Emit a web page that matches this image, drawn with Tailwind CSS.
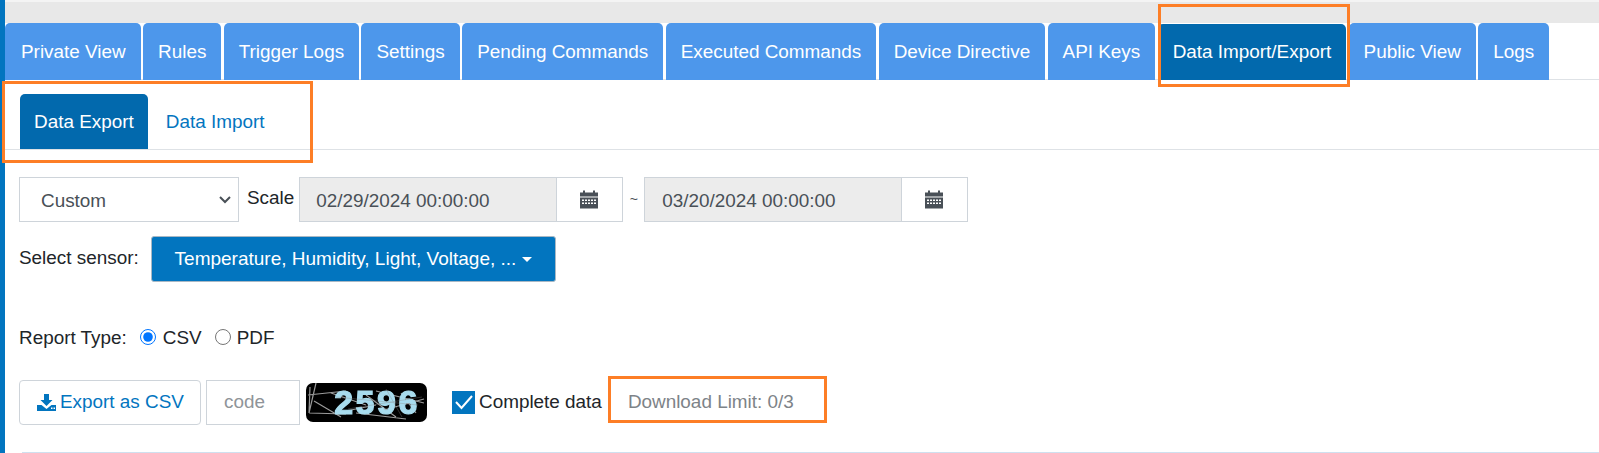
<!DOCTYPE html>
<html lang="en">
<head>
  <meta charset="UTF-8">
  <title>Data Export</title>
  <script src="https://cdn.jsdelivr.net/npm/@tailwindcss/browser@4"></script>
</head>
<body class="bg-white font-['Liberation_Sans',Arial,sans-serif] text-[18.9px] text-[#212529] overflow-hidden">
  <div class="relative flex h-[453px] w-[1599px] overflow-hidden">
    <!-- Sidebar edge -->
    <div class="w-[5px] shrink-0 bg-[#0275bf]"></div>

    <div class="flex-1 min-w-0">
      <!-- Top strip -->
      <div class="h-[23px] bg-[#e8e8e8] border-t-2 border-[#f4f4f4]"></div>

      <!-- Main tabs -->
      <div class="flex h-[57px] gap-[2.4px] border-b border-[#dee2e6] text-white">
        <a class="flex items-center h-[57px] pt-[2px] pl-[16px] pr-[15px] rounded-t-[5px] bg-[#4d97eb]">Private View</a>
        <a class="flex items-center h-[57px] pt-[2px] px-[15px] rounded-t-[5px] bg-[#4d97eb]">Rules</a>
        <a class="flex items-center h-[57px] pt-[2px] px-[15px] rounded-t-[5px] bg-[#4d97eb]">Trigger Logs</a>
        <a class="flex items-center h-[57px] pt-[2px] px-[15px] rounded-t-[5px] bg-[#4d97eb]">Settings</a>
        <a class="flex items-center h-[57px] pt-[2px] px-[15px] rounded-t-[5px] bg-[#4d97eb]">Pending Commands</a>
        <a class="flex items-center h-[57px] pt-[2px] px-[15px] rounded-t-[5px] bg-[#4d97eb]">Executed Commands</a>
        <a class="flex items-center h-[57px] pt-[2px] px-[15px] rounded-t-[5px] bg-[#4d97eb]">Device Directive</a>
        <a class="flex items-center h-[57px] pt-[2px] px-[15px] rounded-t-[5px] bg-[#4d97eb]">API Keys</a>
        <a class="flex items-center h-[56px] mt-px pt-px px-[15px] rounded-t-[5px] bg-[#0269ad]">Data Import/Export</a>
        <a class="flex items-center h-[57px] pt-[2px] px-[15px] rounded-t-[5px] bg-[#4d97eb]">Public View</a>
        <a class="flex items-center h-[57px] pt-[2px] px-[15px] rounded-t-[5px] bg-[#4d97eb]">Logs</a>
      </div>

      <!-- Sub tabs -->
      <div class="flex h-[70px] items-end pl-[15px] border-b border-[#dee2e6]">
        <a class="flex items-center h-[55px] pt-[2px] px-[14px] rounded-t-[5px] bg-[#0269ad] text-white">Data Export</a>
        <a class="flex items-center h-[55px] pt-[2px] px-[18px] text-[#0275bf]">Data Import</a>
      </div>

      <div class="pl-[14px] pt-[27px]">
        <!-- Date range -->
        <div class="flex items-center h-[45px]">
          <div class="relative">
            <select class="block appearance-none w-[220px] h-[45px] pt-[3px] pl-[21px] border border-[#ced4da] text-[#495057]">
              <option>Custom</option>
            </select>
            <svg class="absolute right-[8px] top-[19px] w-[12px] h-[8px]" viewBox="0 0 12 8" fill="none" stroke="#495057" stroke-width="2"><path d="M1 1l5 5 5-5"/></svg>
          </div>
          <span class="ml-[8px] mr-[5px] -mt-[2px]">Scale</span>
          <div class="flex h-[45px] w-[324px] border border-[#ced4da] text-[#495057]">
            <div class="flex items-center flex-1 pt-[3px] pl-[16px] bg-[#ececec] border-r border-[#ced4da]">02/29/2024 00:00:00</div>
            <div class="flex items-center justify-center w-[65px] pr-[2px]">
              <svg class="w-[18px] h-[19px]" viewBox="0 0 18 18" fill="#495057"><path d="M3 0h2v2h8V0h2v2h3v4H0V2h3z"/><path fill-rule="evenodd" d="M0 7h18v11H0zM2 9v1.500h2V9zm3 0v1.500h2V9zm3 0v1.500h2V9zm3 0v1.500h2V9zm3 0v1.500h2V9zM2 12v1.500h2V12zm3 0v1.500h2V12zm3 0v1.500h2V12zm3 0v1.500h2V12zm3 0v1.500h2V12z"/></svg>
            </div>
          </div>
          <span class="w-[21px] text-center text-[14px] text-[#495057]">~</span>
          <div class="flex h-[45px] w-[324px] border border-[#ced4da] text-[#495057]">
            <div class="flex items-center flex-1 pt-[3px] pl-[17px] bg-[#ececec] border-r border-[#ced4da]">03/20/2024 00:00:00</div>
            <div class="flex items-center justify-center w-[65px] pr-[2px]">
              <svg class="w-[18px] h-[19px]" viewBox="0 0 18 18" fill="#495057"><path d="M3 0h2v2h8V0h2v2h3v4H0V2h3z"/><path fill-rule="evenodd" d="M0 7h18v11H0zM2 9v1.500h2V9zm3 0v1.500h2V9zm3 0v1.500h2V9zm3 0v1.500h2V9zm3 0v1.500h2V9zM2 12v1.500h2V12zm3 0v1.500h2V12zm3 0v1.500h2V12zm3 0v1.500h2V12zm3 0v1.500h2V12z"/></svg>
            </div>
          </div>
        </div>

        <!-- Sensor select -->
        <div class="flex items-center h-[46px] mt-[14px]">
          <span class="w-[132px] -mt-[2px]">Select sensor:</span>
          <button class="flex items-center justify-center w-[405px] h-[46px] rounded-[3px] bg-[#0275bf] border border-[#a9b8c4] text-white text-[19px]">
            Temperature, Humidity, Light, Voltage, ...
            <span class="ml-[6px] mt-[1px] border-x-[5px] border-t-[5px] border-x-transparent border-t-white"></span>
          </button>
        </div>

        <!-- Report type -->
        <div class="flex items-center h-[24px] mt-[44px]">
          <span>Report Type:</span>
          <input type="radio" name="report" checked class="w-[16px] h-[16px] -mt-[3px] ml-[13px] mr-[7px] accent-[#0075ff]">
          <span>CSV</span>
          <input type="radio" name="report" class="w-[16px] h-[16px] -mt-[3px] ml-[13px] mr-[6px]">
          <span>PDF</span>
        </div>

        <!-- Export row -->
        <div class="flex items-center h-[46px] mt-[29px]">
          <button class="flex items-center w-[182px] h-[45px] pl-[17px] rounded-[4px] border border-[#ced4da] text-[#0275bf]">
            <svg class="w-[19px] h-[17px] mr-[4px]" viewBox="0 0 19 17" fill="#0275bf"><path d="M7 0h5v6h3.500L9.500 12 3.500 6H7z"/><path fill-rule="evenodd" d="M0 11h4.500l5 4 5-4H19v6H0zM14 13.500v1.500h1.500v-1.500zM16.500 13.500v1.500H18v-1.500z"/></svg>
            Export as CSV
          </button>
          <input placeholder="code" class="w-[94px] h-[45px] ml-[5px] pl-[17px] border border-[#ced4da] placeholder:text-[#8f9499]">
          <!-- Captcha -->
          <svg class="w-[121px] h-[39px] ml-[6px]" viewBox="0 0 121 39">
            <rect width="121" height="39" rx="7" fill="#000"/>
            <g stroke="#9a9a9a" stroke-width="1.200">
              <path d="M2 12L40 8M10 0L3 30M3 30L40 31M8 18L35 34M4 4L3 30M25 10L60 22M70 8L118 20M74 28L118 16M50 30L100 36M60 12L90 34M95 10L110 30M40 28L70 22"/>
            </g>
            <text x="71" y="31" text-anchor="middle" font-size="34" font-weight="700" letter-spacing="2.500" fill="#a8dcee" stroke="#a8dcee" stroke-width="1.200" class="blur-[0.7px]">2596</text>
            <g stroke="#8a8a8a" stroke-width="0.700" opacity="0.500">
              <path d="M30 14L112 22M42 26L116 14M80 6L96 34"/>
            </g>
          </svg>
          <!-- Checkbox -->
          <span class="flex items-center justify-center w-[23px] h-[23px] ml-[25px] bg-[#0275bf]">
            <svg class="w-[21px] h-[21px]" viewBox="0 0 21 21" fill="none" stroke="#fff" stroke-width="2"><path d="M3 10l5.500 6L19 4"/></svg>
          </span>
          <span class="ml-[4px]">Complete data</span>
          <span class="ml-[26px] text-[#7d8388]">Download Limit: 0/3</span>
        </div>

        <hr class="mt-[27px] ml-[3px] border-[#cfe0ef]">
      </div>
    </div>

    <!-- Orange annotation boxes -->
    <div class="absolute left-[2px] top-[81px] w-[311px] h-[82px] border-[3px] border-[#fd7e26]"></div>
    <div class="absolute left-[1158px] top-[4px] w-[192px] h-[83px] border-[3px] border-[#fd7e26]"></div>
    <div class="absolute left-[608px] top-[376px] w-[219px] h-[47px] border-[3px] border-[#fd7e26]"></div>
  </div>
</body>
</html>
